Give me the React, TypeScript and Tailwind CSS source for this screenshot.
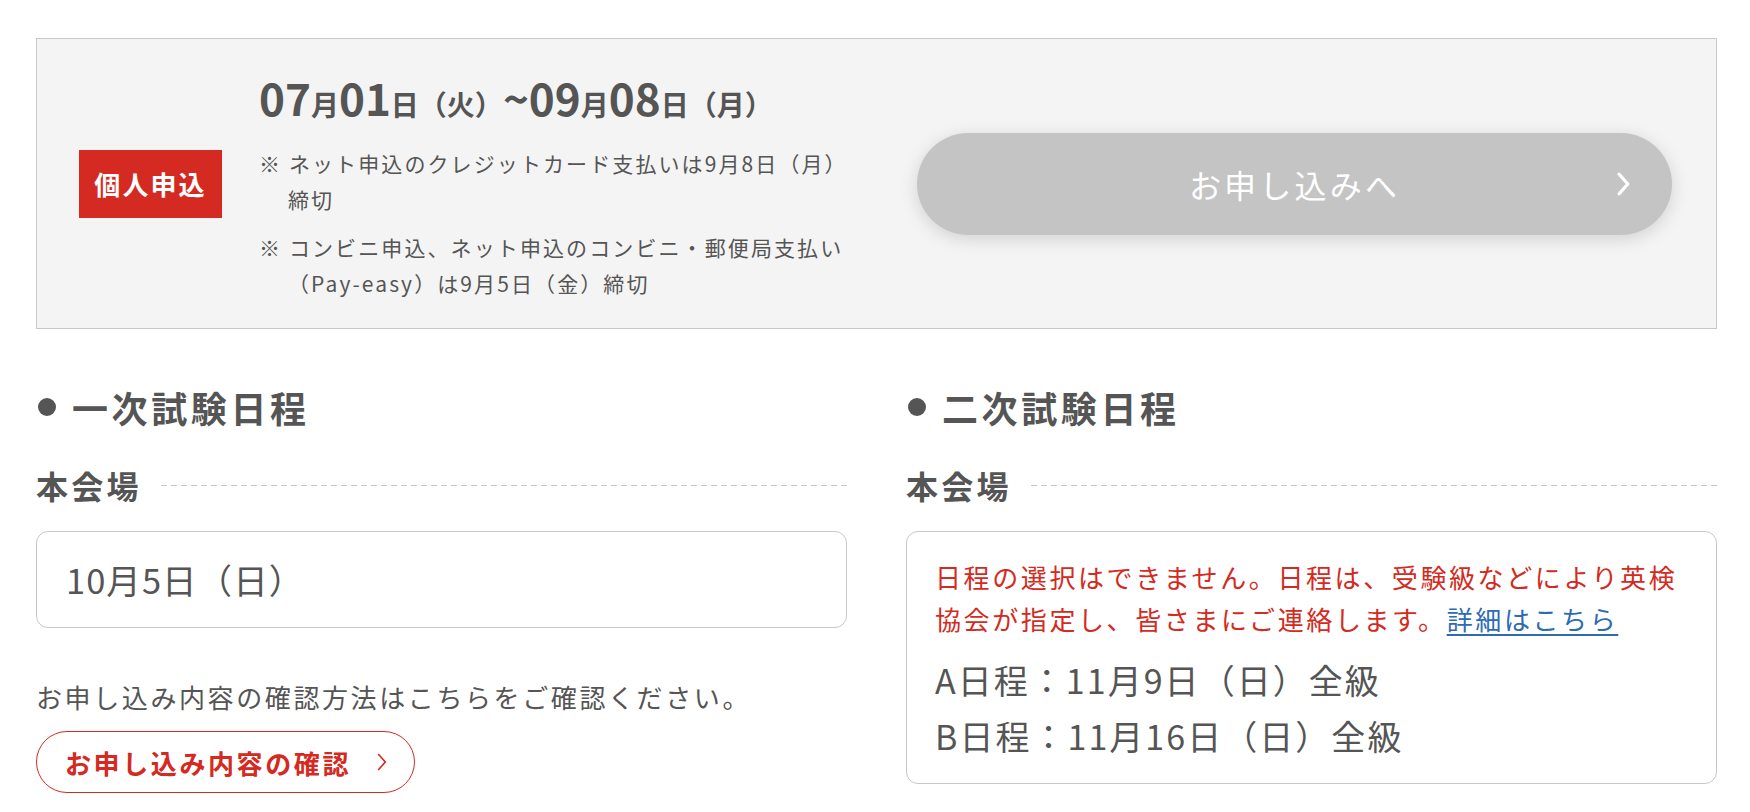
import React from 'react';

const Chevron: React.FC<{ className?: string; stroke?: number }> = ({ className, stroke = 3 }) => (
  <svg viewBox="0 0 12 22" className={className} fill="none">
    <path d="M2 2 L10 11 L2 20" stroke="currentColor" strokeWidth={stroke} strokeLinecap="round" strokeLinejoin="round" />
  </svg>
);

const SectionTitle: React.FC<{ title: string }> = ({ title }) => (
  <div>
    <h2 className="flex items-center text-[36px] leading-[54px] font-bold tracking-[0.1em] text-[#555]">
      <span className="w-[18px] h-[18px] rounded-full bg-[#555] mr-[16px] ml-[2px]" />
      {title}
    </h2>
    <div className="flex items-center mt-[27px]">
      <span className="text-[32px] leading-[48px] font-bold tracking-[0.1em] text-[#555]">本会場</span>
      <span className="flex-1 ml-[19px] h-px bg-[linear-gradient(to_right,#c8c8c8_60%,transparent_60%)] bg-[length:10px_1px] bg-repeat-x" />
    </div>
  </div>
);

export default function App() {
  return (
    <div className="min-h-screen bg-white pt-[38px] pl-[36px] pr-[33px] font-['Noto_Sans_CJK_JP','Noto_Sans',sans-serif] text-[#555]">
      {/* 申込期間 */}
      <div className="flex items-center h-[291px] bg-[#f4f4f4] border border-[#c8c8c8] pl-[42px] pr-[44px]">
        <div className="w-[143px] h-[68px] bg-[#d42a21] text-white flex items-center justify-center text-[26px] font-bold tracking-[0.08em]">
          個人申込
        </div>
        <div className="ml-[37px] w-[600px] mt-[8px]">
          <div className="flex items-baseline font-bold text-[#555] leading-none whitespace-nowrap">
            <span className="text-[44px]">07</span>
            <span className="text-[28px]">月</span>
            <span className="text-[44px]">01</span>
            <span className="text-[28px]">日（火）</span>
            <span className="text-[44px]">~09</span>
            <span className="text-[28px]">月</span>
            <span className="text-[44px]">08</span>
            <span className="text-[28px]">日（月）</span>
          </div>
          <ul className="mt-[26px] text-[21px] leading-[36px] tracking-[0.1em] text-[#555]">
            <li className="pl-[29px] -indent-[29px]">
              ※ ネット申込のクレジットカード支払いは9月8日（月）<br />締切
            </li>
            <li className="mt-[12px] pl-[29px] -indent-[29px]">
              ※ コンビニ申込、ネット申込のコンビニ・郵便局支払い<br />（Pay-easy）は9月5日（金）締切
            </li>
          </ul>
        </div>
        <button className="ml-auto relative w-[755px] h-[102px] rounded-full bg-[#c4c4c4] text-white text-[32px] tracking-[0.1em] shadow-[0_4px_18px_rgba(0,0,0,0.14)] flex items-center justify-center">
          お申し込みへ
          <Chevron className="absolute right-[42px] top-1/2 -translate-y-1/2 w-[13px] h-[24px]" />
        </button>
      </div>

      {/* 試験日程 */}
      <div className="grid grid-cols-2 gap-[59px] mt-[51px]">
        <div>
          <SectionTitle title="一次試験日程" />
          <div className="mt-[22px] border border-[#c8c8c8] rounded-[12px] px-[29px] py-[25px] text-[34.5px] leading-[45px] tracking-[0.03em]">
            10月5日（日）
          </div>
          <p className="mt-[49px] text-[26px] leading-[40px] tracking-[0.1em]">
            お申し込み内容の確認方法はこちらをご確認ください。
          </p>
          <button className="mt-[14px] h-[62px] w-[379px] rounded-full border border-[#d42a21] bg-white text-[#d42a21] text-[26px] font-bold tracking-[0.1em] flex items-center pl-[28px]">
            お申し込み内容の確認
            <Chevron className="ml-[26px] w-[10px] h-[20px]" stroke={2} />
          </button>
        </div>
        <div>
          <SectionTitle title="二次試験日程" />
          <div className="mt-[22px] border border-[#c8c8c8] rounded-[12px] px-[28px] pt-[24px] pb-[19px]">
            <p className="text-[#d42a21] text-[26px] leading-[42px] tracking-[0.1em]">
              日程の選択はできません。日程は、受験級などにより英検協会が指定し、皆さまにご連絡します。
              <a href="#" className="text-[#2d6bb3] underline underline-offset-[4px]">詳細はこちら</a>
            </p>
            <div className="mt-[12px] text-[34px] leading-[56px] tracking-[0.06em]">
              <p>A日程：11月9日（日）全級</p>
              <p>B日程：11月16日（日）全級</p>
            </div>
          </div>
        </div>
      </div>
    </div>
  );
}
